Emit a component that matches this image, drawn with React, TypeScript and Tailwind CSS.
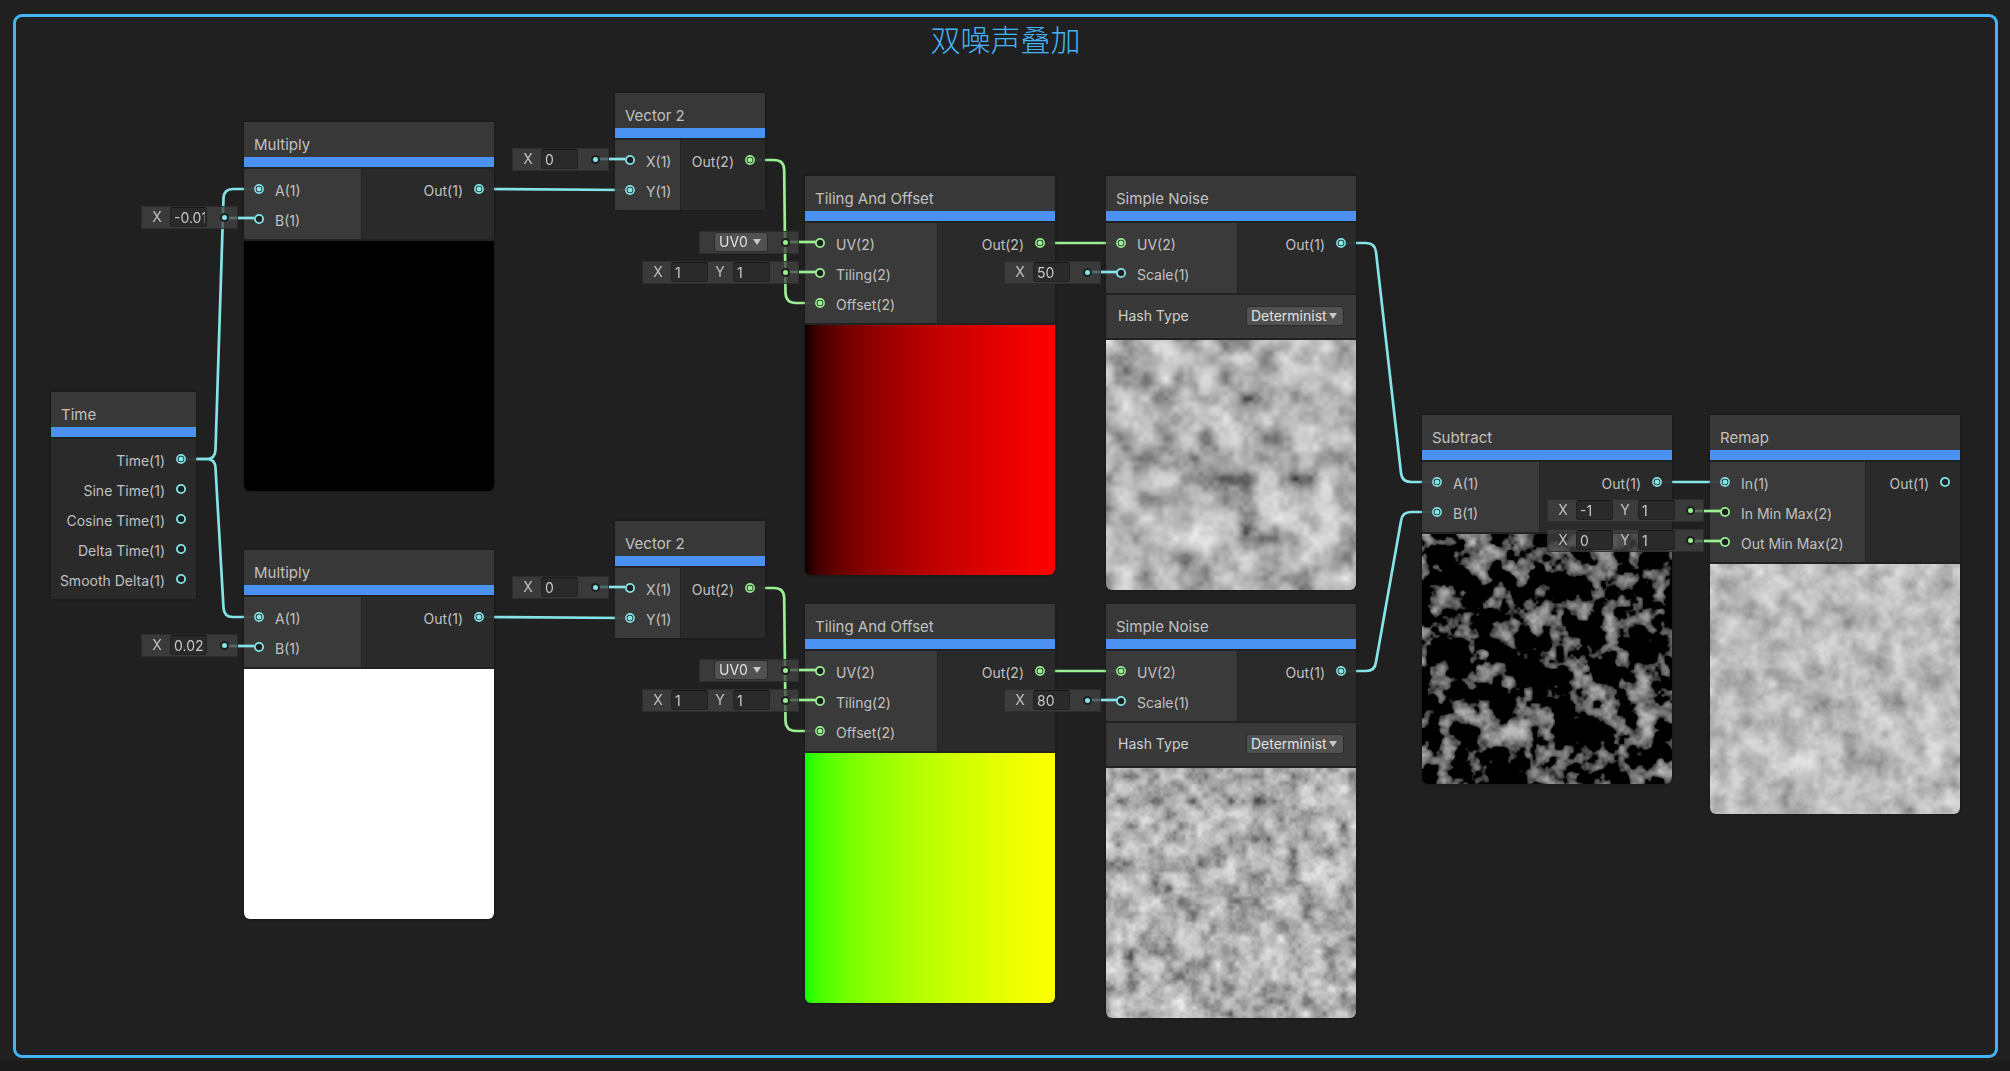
import { useId, useLayoutEffect, useRef } from "react";
import type { ReactNode } from "react";

/* ---------- Noise ---------- */

function hash(x: number, y: number) {
  const b = (y ^ 1103515245) >>> 0;
  let a = (x + b) >>> 0;
  a = Math.imul(a, b) >>> 0;
  a = (a ^ (a >>> 5)) >>> 0;
  a = Math.imul(a, 0x27d4eb2d) >>> 0;
  return (a >>> 8) / 0xffffff;
}

function valueNoise(x: number, y: number) {
  const i = Math.floor(x);
  const j = Math.floor(y);
  const fx = x - i;
  const fy = y - j;
  const u = fx * fx * (3 - 2 * fx);
  const v = fy * fy * (3 - 2 * fy);
  const bottom = hash(i, j) * (1 - u) + hash(i + 1, j) * u;
  const top = hash(i, j + 1) * (1 - u) + hash(i + 1, j + 1) * u;
  return bottom * (1 - v) + top * v;
}

function simpleNoise(u: number, v: number, scale: number) {
  return (
    valueNoise(u * scale, v * scale) * 0.125 +
    valueNoise((u * scale) / 2, (v * scale) / 2) * 0.25 +
    valueNoise((u * scale) / 4, (v * scale) / 4) * 0.5
  );
}

const TIME = 88549.2;

const noiseA = (u: number, v: number) => simpleNoise(u, v - 0.018 * TIME, 50);
const noiseB = (u: number, v: number) => simpleNoise(u, v + 0.02 * TIME, 80);
const subtract = (u: number, v: number) => noiseA(u, v) - noiseB(u, v);
const remap = (u: number, v: number) => (subtract(u, v) + 1) / 2;

function toSrgb(n: number) {
  const c = Math.min(1, Math.max(0, n));
  return 255 * (c <= 0.0031308 ? 12.92 * c : 1.055 * Math.pow(c, 1 / 2.4) - 0.055);
}

const SIZE = 250;

type Shade = (u: number, v: number) => [number, number, number];

const grey =
  (f: (u: number, v: number) => number): Shade =>
  (u, v) => {
    const n = f(u, v);
    return [n, n, n];
  };

const black: Shade = () => [0, 0, 0];
const white: Shade = () => [1, 1, 1];
const redRamp: Shade = (u) => [u, 0, 0];
const yellowRamp: Shade = (u) => [u, 1, 0];
const shadeA = grey(noiseA);
const shadeB = grey(noiseB);
const shadeSubtract = grey(subtract);
const shadeRemap = grey(remap);

function Preview({ shade, label }: { shade: Shade; label: string }) {
  const ref = useRef<HTMLCanvasElement>(null);
  useLayoutEffect(() => {
    const ctx = ref.current?.getContext("2d");
    if (!ctx) return;
    const image = ctx.createImageData(SIZE, SIZE);
    for (let y = 0; y < SIZE; y++) {
      for (let x = 0; x < SIZE; x++) {
        const [r, g, b] = shade((x + 0.5) / SIZE, 1 - (y + 0.5) / SIZE);
        const k = (y * SIZE + x) * 4;
        image.data[k] = toSrgb(r);
        image.data[k + 1] = toSrgb(g);
        image.data[k + 2] = toSrgb(b);
        image.data[k + 3] = 255;
      }
    }
    ctx.putImageData(image, 0, 0);
  }, [shade]);
  return (
    <canvas
      ref={ref}
      width={SIZE}
      height={SIZE}
      role="img"
      aria-label={label}
      className="block aspect-square w-full rounded-b-md"
    />
  );
}

/* ---------- Ports ---------- */

const CYAN = "#84e4e7";
const GREEN = "#9aef92";

type Tone = "cyan" | "green";
type PortSpec = { name: string; tone: Tone; on?: boolean };

function Port({ tone, on }: { tone: Tone; on?: boolean }) {
  const color = tone === "cyan" ? CYAN : GREEN;
  return (
    <svg viewBox="0 0 10 10" className="size-[10px] shrink-0" aria-hidden="true">
      <circle cx="5" cy="5" r="4.1" fill="#1d2020" stroke={color} strokeWidth={on ? 1.6 : 1.8} />
      {on && <circle cx="5" cy="5" r="2.5" fill={color} />}
    </svg>
  );
}

function PortList({ ports, side }: { ports: PortSpec[]; side: "in" | "out" }) {
  return (
    <ul className="flex flex-col py-[5px]">
      {ports.map((p) => (
        <li
          key={p.name}
          className={`flex h-[30px] items-center gap-[11px] ${side === "in" ? "pl-[10px]" : "flex-row-reverse pr-[10px]"}`}
        >
          <Port tone={p.tone} on={p.on} />
          <span className="pt-1 text-[14px] leading-[20px]">{p.name}</span>
        </li>
      ))}
    </ul>
  );
}

/* ---------- Node ---------- */

type NodeProps = {
  title: string;
  place: string;
  inputs?: PortSpec[];
  inputWidth?: string;
  outputs: PortSpec[];
  control?: ReactNode;
  preview?: ReactNode;
};

function GraphNode({ title, place, inputs, inputWidth, outputs, control, preview }: NodeProps) {
  return (
    <section
      className={`absolute rounded-b-md bg-[#232323]/80 text-[#c1c1c1] shadow-[0_0_3px_rgba(0,0,0,0.45)] ${place}`}
    >
      <header className="flex h-[35px] items-end bg-[#3f3f3f]/80 px-[10px] pb-[2px]">
        <h2 className="text-[15px] leading-[20px]">{title}</h2>
      </header>
      <div className="h-[10px] bg-[#4b91f1]" />
      <div className="mt-[2px] flex gap-px">
        {inputs && (
          <div className={`bg-[#434343]/75 ${inputWidth}`}>
            <PortList ports={inputs} side="in" />
          </div>
        )}
        <div className="flex-1 bg-[#2d2d2d]/80">
          <PortList ports={outputs} side="out" />
        </div>
      </div>
      {control && <div className="mt-[2px] bg-[#393939]">{control}</div>}
      {preview && <div className="mt-[2px]">{preview}</div>}
    </section>
  );
}

/* ---------- Inline inputs ---------- */

function Dropdown({ id, value, label, width }: { id?: string; value: string; label?: string; width: string }) {
  return (
    <span className={`relative block ${width}`}>
      <select
        id={id}
        aria-label={label}
        defaultValue={value}
        className="block h-[20px] w-full appearance-none rounded-[3px] border border-[#2c2c2c] bg-[#515151] pl-1 text-[14px] leading-[18px] text-[#e0e0e0] outline-none"
      >
        <option>{value}</option>
      </select>
      <svg viewBox="0 0 8 6" className="pointer-events-none absolute top-[7px] right-[7px] h-[6px] w-2" aria-hidden="true">
        <path d="M0 0h8L4 6z" fill="#c8c8c8" />
      </svg>
    </span>
  );
}

function HashType() {
  const id = useId();
  return (
    <div className="flex h-[43px] items-center justify-between px-3 pb-[2px]">
      <label htmlFor={id} className="text-[14px] leading-[20px] text-[#cfcfcf]">
        Hash Type
      </label>
      <Dropdown id={id} value="Determinist" width="w-[98px]" />
    </div>
  );
}

function Field({ axis, value }: { axis: string; value: string }) {
  return (
    <label className="flex items-center gap-2">
      <span className="w-[10px] text-center text-[14px] leading-[20px]">{axis}</span>
      <input
        type="text"
        defaultValue={value}
        className="h-[20px] w-[37px] rounded-[3px] border border-[#222222] border-t-[#141414] bg-[#2a2a2a] pr-px pl-[3px] text-[14px] leading-[18px] text-[#c8c8c8] outline-none"
      />
    </label>
  );
}

function Inline({ place, tone, children }: { place: string; tone: Tone; children: ReactNode }) {
  return (
    <div
      className={`absolute flex h-[23px] items-center justify-between border border-[#2a2a2a]/80 bg-[#434343]/75 pr-2 pb-px pl-[10px] text-[#c1c1c1] ${place}`}
    >
      <div className="flex items-center gap-[7px]">{children}</div>
      <span className="flex size-[9px] items-center justify-center rounded-full bg-[#1f1f1f]">
        <span className={`size-[5px] rounded-full ${tone === "cyan" ? "bg-[#84e4e7]" : "bg-[#9aef92]"}`} />
      </span>
    </div>
  );
}

/* ---------- Wires ---------- */

type Wire = { d: string; color: string };

const wires: Wire[] = [
  { color: CYAN, d: "M180 459H207Q215 459 215.5 450L223.5 198Q224 189 233 189H254" },
  { color: CYAN, d: "M180 459H207Q215 459 215.5 468L223.5 608Q224 617 233 617H254" },
  { color: CYAN, d: "M478 189L625 190" },
  { color: CYAN, d: "M478 617L625 618" },
  { color: GREEN, d: "M749 160H774Q784 160 784.2 170L785.5 293Q786 303 796 303H816" },
  { color: GREEN, d: "M749 588H774Q784 588 784.2 598L785.5 721Q786 731 796 731H816" },
  { color: GREEN, d: "M1040 243H1117" },
  { color: GREEN, d: "M1040 671H1117" },
  { color: CYAN, d: "M1341 243H1366Q1375 243 1376 252L1401 473Q1402 482 1411 482H1432" },
  { color: CYAN, d: "M1341 671H1366Q1375 671 1376 662L1401 521Q1402 512 1411 512H1432" },
  { color: CYAN, d: "M1656 482H1720" },
];

const inlineWires: Wire[] = [
  { color: CYAN, d: "M224 218H254" },
  { color: CYAN, d: "M224 646H254" },
  { color: CYAN, d: "M595 159H625" },
  { color: CYAN, d: "M595 587H625" },
  { color: GREEN, d: "M786 242H816" },
  { color: GREEN, d: "M786 272H816" },
  { color: GREEN, d: "M786 670H816" },
  { color: GREEN, d: "M786 700H816" },
  { color: CYAN, d: "M1087 272H1117" },
  { color: CYAN, d: "M1087 700H1117" },
  { color: GREEN, d: "M1691 511H1721" },
  { color: GREEN, d: "M1691 541H1721" },
];

function Wires({ items }: { items: Wire[] }) {
  return (
    <svg className="pointer-events-none absolute inset-0 size-full overflow-visible" fill="none" strokeWidth="2.7" aria-hidden="true">
      {items.map((w) => (
        <path key={w.d} d={w.d} stroke={w.color} />
      ))}
    </svg>
  );
}

/* ---------- Page ---------- */

const timePorts: PortSpec[] = [
  { name: "Time(1)", tone: "cyan", on: true },
  { name: "Sine Time(1)", tone: "cyan" },
  { name: "Cosine Time(1)", tone: "cyan" },
  { name: "Delta Time(1)", tone: "cyan" },
  { name: "Smooth Delta(1)", tone: "cyan" },
];
const multiplyPorts: PortSpec[] = [
  { name: "A(1)", tone: "cyan", on: true },
  { name: "B(1)", tone: "cyan" },
];
const subtractPorts: PortSpec[] = [
  { name: "A(1)", tone: "cyan", on: true },
  { name: "B(1)", tone: "cyan", on: true },
];
const vectorPorts: PortSpec[] = [
  { name: "X(1)", tone: "cyan" },
  { name: "Y(1)", tone: "cyan", on: true },
];
const tilingPorts: PortSpec[] = [
  { name: "UV(2)", tone: "green" },
  { name: "Tiling(2)", tone: "green" },
  { name: "Offset(2)", tone: "green", on: true },
];
const noisePorts: PortSpec[] = [
  { name: "UV(2)", tone: "green", on: true },
  { name: "Scale(1)", tone: "cyan" },
];
const remapPorts: PortSpec[] = [
  { name: "In(1)", tone: "cyan", on: true },
  { name: "In Min Max(2)", tone: "green" },
  { name: "Out Min Max(2)", tone: "green" },
];
const out1: PortSpec[] = [{ name: "Out(1)", tone: "cyan", on: true }];
const out1Free: PortSpec[] = [{ name: "Out(1)", tone: "cyan" }];
const out2: PortSpec[] = [{ name: "Out(2)", tone: "green", on: true }];

export default function App() {
  return (
    <div className="flex min-h-screen flex-col bg-[#202020] font-['Inter',sans-serif]">
      <main className="relative flex flex-1 flex-col pt-[14px] pr-3 pb-[3px] pl-[13px]">
        <div className="flex-1 rounded-[9px] border-[3px] border-[#43b5f8]">
          <h1 className="text-center font-['Noto_Sans_CJK_SC',sans-serif] text-[30px] leading-[42px] font-light text-[#43b5f8]">
            双噪声叠加
          </h1>
        </div>

        <Wires items={wires} />

        <GraphNode title="Time" place="top-[392px] left-[51px] w-[145px]" outputs={timePorts} />
        <GraphNode title="Multiply" place="top-[122px] left-[244px] w-[250px]" inputs={multiplyPorts} inputWidth="w-[117px]" outputs={out1} preview={<Preview shade={black} label="Black preview" />} />
        <GraphNode title="Multiply" place="top-[550px] left-[244px] w-[250px]" inputs={multiplyPorts} inputWidth="w-[117px]" outputs={out1} preview={<Preview shade={white} label="White preview" />} />
        <GraphNode title="Vector 2" place="top-[93px] left-[615px] w-[150px]" inputs={vectorPorts} inputWidth="w-[65px]" outputs={out2} />
        <GraphNode title="Vector 2" place="top-[521px] left-[615px] w-[150px]" inputs={vectorPorts} inputWidth="w-[65px]" outputs={out2} />
        <GraphNode title="Tiling And Offset" place="top-[176px] left-[805px] w-[250px]" inputs={tilingPorts} inputWidth="w-[132px]" outputs={out2} preview={<Preview shade={redRamp} label="Red ramp preview" />} />
        <GraphNode title="Tiling And Offset" place="top-[604px] left-[805px] w-[250px]" inputs={tilingPorts} inputWidth="w-[132px]" outputs={out2} preview={<Preview shade={yellowRamp} label="Yellow ramp preview" />} />
        <GraphNode title="Simple Noise" place="top-[176px] left-[1106px] w-[250px]" inputs={noisePorts} inputWidth="w-[131px]" outputs={out1} control={<HashType />} preview={<Preview shade={shadeA} label="Noise preview" />} />
        <GraphNode title="Simple Noise" place="top-[604px] left-[1106px] w-[250px]" inputs={noisePorts} inputWidth="w-[131px]" outputs={out1} control={<HashType />} preview={<Preview shade={shadeB} label="Noise preview" />} />
        <GraphNode title="Subtract" place="top-[415px] left-[1422px] w-[250px]" inputs={subtractPorts} inputWidth="w-[117px]" outputs={out1} preview={<Preview shade={shadeSubtract} label="Subtracted noise preview" />} />
        <GraphNode title="Remap" place="top-[415px] left-[1710px] w-[250px]" inputs={remapPorts} inputWidth="w-[155px]" outputs={out1Free} preview={<Preview shade={shadeRemap} label="Remapped noise preview" />} />

        <Wires items={inlineWires} />

        <Inline place="top-[206px] left-[141px] w-[97px]" tone="cyan"><Field axis="X" value="-0.018" /></Inline>
        <Inline place="top-[634px] left-[141px] w-[97px]" tone="cyan"><Field axis="X" value="0.02" /></Inline>
        <Inline place="top-[148px] left-[512px] w-[97px]" tone="cyan"><Field axis="X" value="0" /></Inline>
        <Inline place="top-[576px] left-[512px] w-[97px]" tone="cyan"><Field axis="X" value="0" /></Inline>
        <Inline place="top-[231px] left-[699px] w-[100px]" tone="green"><span className="pl-1"><Dropdown value="UV0" label="UV channel" width="w-[54px]" /></span></Inline>
        <Inline place="top-[659px] left-[699px] w-[100px]" tone="green"><span className="pl-1"><Dropdown value="UV0" label="UV channel" width="w-[54px]" /></span></Inline>
        <Inline place="top-[261px] left-[642px] w-[157px]" tone="green"><Field axis="X" value="1" /><Field axis="Y" value="1" /></Inline>
        <Inline place="top-[689px] left-[642px] w-[157px]" tone="green"><Field axis="X" value="1" /><Field axis="Y" value="1" /></Inline>
        <Inline place="top-[261px] left-[1004px] w-[97px]" tone="cyan"><Field axis="X" value="50" /></Inline>
        <Inline place="top-[689px] left-[1004px] w-[97px]" tone="cyan"><Field axis="X" value="80" /></Inline>
        <Inline place="top-[499px] left-[1547px] w-[157px]" tone="green"><Field axis="X" value="-1" /><Field axis="Y" value="1" /></Inline>
        <Inline place="top-[529px] left-[1547px] w-[157px]" tone="green"><Field axis="X" value="0" /><Field axis="Y" value="1" /></Inline>
      </main>
      <div className="h-[10px] bg-[#1b1b1b]" />
    </div>
  );
}
